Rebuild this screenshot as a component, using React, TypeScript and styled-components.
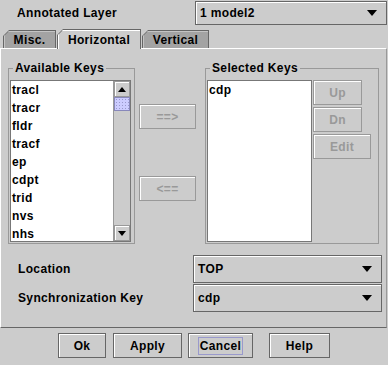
import React from "react";
import styled, { createGlobalStyle } from "styled-components";

const GlobalStyle = createGlobalStyle`
  html, body {
    margin: 0;
    padding: 0;
    background: #cccccc;
  }
  body {
    font-family: "Liberation Sans", Arial, sans-serif;
    font-size: 12px;
    font-weight: bold;
    color: #000;
    letter-spacing: 0.35px;
  }
`;

const Dialog = styled.div`
  width: 388px;
  height: 365px;
  background: #cccccc;
  display: flex;
  flex-direction: column;
  overflow: hidden;
`;

const TopRow = styled.div`
  display: flex;
  align-items: flex-start;
  height: 29px;
  padding: 1px 1px 0 17px;
  box-sizing: border-box;
`;

const Label = styled.div`
  line-height: 24px;
  flex: 1;
`;

const ComboBox = styled.div<{ $width: number; $height: number }>`
  width: ${(p) => p.$width}px;
  height: ${(p) => p.$height}px;
  box-sizing: border-box;
  border: 1px solid #666;
  box-shadow: inset 1px 1px 0 #fff;
  background: #cccccc;
  display: flex;
  align-items: center;
  padding: 0 9px 0 4px;
`;

const ComboText = styled.span`
  flex: 1;
`;

const DownArrow = () => (
  <svg width="10" height="6" viewBox="0 0 10 6">
    <path d="M0 0 H10 L5 6 Z" fill="#000" />
  </svg>
);

const TabStrip = styled.div`
  display: flex;
  align-items: flex-end;
  height: 19px;
  padding-left: 3px;
  gap: 1px;
  position: relative;
  z-index: 1;
`;

const Tab = styled.div<{ $width: number; $selected?: boolean }>`
  width: ${(p) => p.$width}px;
  height: ${(p) => (p.$selected ? 20 : 18)}px;
  margin-bottom: ${(p) => (p.$selected ? -1 : 0)}px;
  box-sizing: border-box;
  padding: 1px 1px 0 1px;
  background: #666;
  clip-path: polygon(6px 0, 100% 0, 100% 100%, 0 100%, 0 6px);
  display: flex;
`;

const TabFace = styled.div<{ $selected?: boolean }>`
  flex: 1;
  background: ${(p) => (p.$selected ? "#cccccc" : "#a3a3a3")};
  box-shadow: inset 1px 1px 0 ${(p) => (p.$selected ? "#fff" : "#c4c4c4")};
  clip-path: polygon(5px 0, 100% 0, 100% 100%, 0 100%, 0 5px);
  display: flex;
  align-items: center;
  justify-content: center;
  padding-top: 1px;
`;

const TabPanel = styled.div`
  height: 280px;
  box-sizing: border-box;
  border-top: 1px solid #fff;
  border-left: 1px solid #fff;
  border-bottom: 1px solid #666;
  border-right: 1px solid #999;
  margin-right: 1px;
  display: flex;
  flex-direction: column;
`;

const KeysRow = styled.div`
  display: flex;
  align-items: flex-start;
  padding: 12px 0 0 7px;
`;

const Group = styled.fieldset<{ $width: number }>`
  width: ${(p) => p.$width}px;
  height: 183px;
  box-sizing: border-box;
  margin: 0;
  padding: 5px 2px 0 1px;
  border: 1px solid #999;
  display: flex;
  align-items: flex-start;
  min-width: 0;
`;

const GroupTitle = styled.legend`
  padding: 0 2px;
  margin-left: 3px;
  line-height: 14px;
`;

const ListBox = styled.div<{ $width: number }>`
  width: ${(p) => p.$width}px;
  height: 162px;
  box-sizing: border-box;
  background: #fff;
  border: 1px solid #777;
  display: flex;
  overflow: hidden;
`;

const Items = styled.div`
  flex: 1;
  overflow: hidden;
`;

const Item = styled.div`
  height: 18px;
  line-height: 18px;
  padding-left: 1px;
  white-space: nowrap;
`;

const ScrollBar = styled.div`
  width: 16px;
  display: flex;
  flex-direction: column;
  background: #cccccc;
  border-left: 1px solid #999;
`;

const ScrollButton = styled.div`
  height: 16px;
  box-sizing: border-box;
  border: 1px solid #999;
  box-shadow: inset 1px 1px 0 #fff;
  background: #cccccc;
  display: flex;
  align-items: center;
  justify-content: center;
`;

const Thumb = styled.div`
  height: 14px;
  box-sizing: border-box;
  border: 1px solid #8888bb;
  background-color: #ccccff;
  background-image: radial-gradient(#9999cc 0.6px, transparent 0.7px);
  background-size: 3px 3px;
`;

const Track = styled.div`
  flex: 1;
`;

const MoveColumn = styled.div`
  width: 70px;
  display: flex;
  flex-direction: column;
  align-items: flex-start;
  padding: 43px 0 0 4px;
  box-sizing: border-box;
  gap: 47px;
`;

const Button = styled.div<{ $width: number; $disabled?: boolean }>`
  width: ${(p) => p.$width}px;
  height: 25px;
  box-sizing: border-box;
  border: 1px solid ${(p) => (p.$disabled ? "#999" : "#666")};
  box-shadow: inset 1px 1px 0 #fff;
  background: #cccccc;
  color: ${(p) => (p.$disabled ? "#999" : "#000")};
  display: flex;
  align-items: center;
  justify-content: center;
`;

const OrderColumn = styled.div`
  display: flex;
  flex-direction: column;
  align-items: flex-start;
  padding-left: 1px;
  gap: 2px;
`;

const OptionRows = styled.div`
  display: grid;
  grid-template-columns: 175px 189px;
  grid-auto-rows: 28px;
  row-gap: 1px;
  padding: 11px 0 0 17px;
  align-items: center;
`;

const ButtonBar = styled.div`
  display: flex;
  padding: 5px 0 0 58px;
`;

const FocusRing = styled.span`
  display: inline-block;
  border: 1px solid #9999cc;
  line-height: 14px;
  padding: 1px 1px;
`;

const UpArrow = () => (
  <svg width="8" height="5" viewBox="0 0 8 5">
    <path d="M0 5 H8 L4 0 Z" fill="#000" />
  </svg>
);

const SmallDownArrow = () => (
  <svg width="8" height="5" viewBox="0 0 8 5">
    <path d="M0 0 H8 L4 5 Z" fill="#000" />
  </svg>
);

const available = ["tracl", "tracr", "fldr", "tracf", "ep", "cdpt", "trid", "nvs", "nhs", "dvsc"];
const selected = ["cdp"];

export default function App() {
  return (
    <Dialog>
      <GlobalStyle />
      <TopRow>
        <Label>Annotated Layer</Label>
        <ComboBox $width={192} $height={24}>
          <ComboText>1 model2</ComboText>
          <DownArrow />
        </ComboBox>
      </TopRow>
      <TabStrip>
        <Tab $width={53}>
          <TabFace>Misc.</TabFace>
        </Tab>
        <Tab $width={84} $selected>
          <TabFace $selected>Horizontal</TabFace>
        </Tab>
        <Tab $width={67}>
          <TabFace>Vertical</TabFace>
        </Tab>
      </TabStrip>
      <TabPanel>
        <KeysRow>
          <Group $width={127}>
            <GroupTitle>Available Keys</GroupTitle>
            <ListBox $width={121}>
              <Items>
                {available.map((k) => (
                  <Item key={k}>{k}</Item>
                ))}
              </Items>
              <ScrollBar>
                <ScrollButton>
                  <UpArrow />
                </ScrollButton>
                <Thumb />
                <Track />
                <ScrollButton>
                  <SmallDownArrow />
                </ScrollButton>
              </ScrollBar>
            </ListBox>
          </Group>
          <MoveColumn>
            <Button $width={57} $disabled>==&gt;</Button>
            <Button $width={57} $disabled>&lt;==</Button>
          </MoveColumn>
          <Group $width={174}>
            <GroupTitle>Selected Keys</GroupTitle>
            <ListBox $width={105}>
              <Items>
                {selected.map((k) => (
                  <Item key={k}>{k}</Item>
                ))}
              </Items>
            </ListBox>
            <OrderColumn>
              <Button $width={49} $disabled>Up</Button>
              <Button $width={49} $disabled>Dn</Button>
              <Button $width={58} $disabled>Edit</Button>
            </OrderColumn>
          </Group>
        </KeysRow>
        <OptionRows>
          <Label>Location</Label>
          <ComboBox $width={189} $height={28}>
            <ComboText>TOP</ComboText>
            <DownArrow />
          </ComboBox>
          <Label>Synchronization Key</Label>
          <ComboBox $width={189} $height={28}>
            <ComboText>cdp</ComboText>
            <DownArrow />
          </ComboBox>
        </OptionRows>
      </TabPanel>
      <ButtonBar>
        <Button $width={48}>Ok</Button>
        <Button $width={69} style={{ marginLeft: 7 }}>Apply</Button>
        <Button $width={65} style={{ marginLeft: 6 }}>
          <FocusRing>Cancel</FocusRing>
        </Button>
        <Button $width={61} style={{ marginLeft: 16 }}>Help</Button>
      </ButtonBar>
    </Dialog>
  );
}
